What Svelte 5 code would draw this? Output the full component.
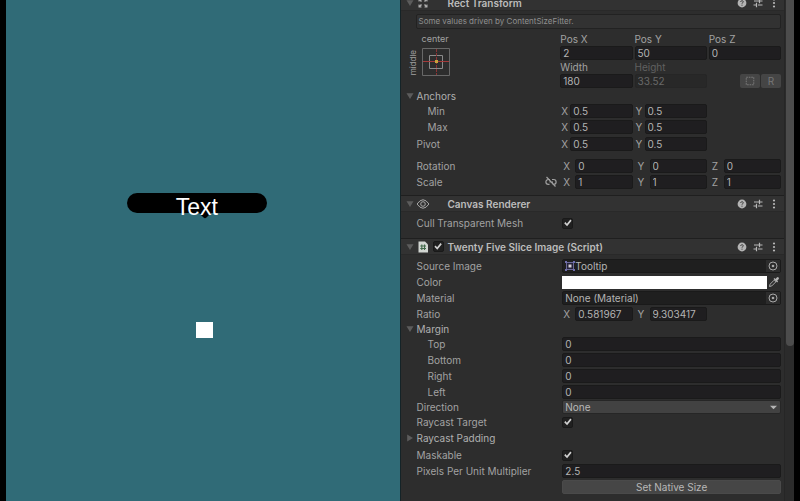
<script>
  let anchorsOpen = $state(true);
  let marginOpen = $state(true);
  let paddingOpen = $state(false);

  const anchors = [
    { name: 'Min', x: '0.5', y: '0.5' },
    { name: 'Max', x: '0.5', y: '0.5' }
  ];
  const margins = ['Top', 'Bottom', 'Right', 'Left'];
</script>

{#snippet arrow(open)}
  <svg class="arrow" class:closed={!open} viewBox="0 0 8 8" aria-hidden="true"><path d="M0.5 1.200h7L4 7z" /></svg>
{/snippet}

{#snippet tools(title)}
  <span class="tools">
    <button aria-label="{title} help">
      <svg viewBox="0 0 12 12"><circle cx="6" cy="6" r="4.400" fill="#b4b4b4" /><path d="M4.700 5c0-1.700 2.600-1.600 2.600-.2 0 .9-1.300.9-1.300 1.900M6 7.700v1" fill="none" stroke="#3a3a3a" /></svg>
    </button>
    <button aria-label="{title} presets">
      <svg viewBox="0 0 12 12" fill="none" stroke="#b8b8b8" stroke-width="1.200"><path d="M2 4h5.500M7.500 1.800v4.400M7.500 4h3M1.500 8h3M4.500 5.800v4.400M6 8h4.500" /></svg>
    </button>
    <button aria-label="{title} menu">
      <svg viewBox="0 0 12 12" fill="#b8b8b8"><circle cx="6" cy="2.500" r="1.100" /><circle cx="6" cy="6" r="1.100" /><circle cx="6" cy="9.500" r="1.100" /></svg>
    </button>
  </span>
{/snippet}

{#snippet axis(group, letter, value)}
  <label class="axis"><span>{letter}</span><input class="field" aria-label="{group} {letter}" {value} /></label>
{/snippet}

{#snippet picker(title)}
  <button class="pick" aria-label="Pick {title}">
    <svg viewBox="0 0 12 12" fill="none" stroke="#a8a8a8"><circle cx="6" cy="6" r="4" /><circle cx="6" cy="6" r="1.300" fill="#a8a8a8" stroke="none" /></svg>
  </button>
{/snippet}

<div class="editor">
  <main class="game">
    <div class="tooltip">
      <svg class="tail" viewBox="0 0 14 7" aria-hidden="true"><path d="M0 0h14L8.500 5.500Q7 7 5.500 5.500z" /></svg>
      <span>Text</span>
    </div>
    <div class="target"></div>
  </main>

  <aside class="inspector">
    <div class="components">
      <section>
        <header>
          {@render arrow(true)}
          <svg class="kind" viewBox="0 0 12 12" fill="#b0b0b0" aria-hidden="true"><path d="M1.500 1.500h3v1l-1 0 1.500 1.500-1 1-1.500-1.500v1h-1zM10.500 1.500h-3v1h1L7 4l1 1 1.500-1.500v1h1zM1.500 10.500h3v-1h-1L5 8 4 7 2.500 8.500v-1h-1zM10.500 10.500h-3v-1h1L7 8l1-1 1.500 1.500v-1h1z" /></svg>
          <span class="slot"></span>
          <h2>Rect Transform</h2>
          {@render tools('Rect Transform')}
        </header>
        <div class="body rect">
          <p class="help">Some values driven by ContentSizeFitter.</p>
          <div class="row placement">
            <div class="preset">
              <span class="across">center</span>
              <span class="down">middle</span>
              <button aria-label="Anchor presets">
                <svg viewBox="0 0 28 28" fill="none"><path d="M.5.5h27v27H.5z" stroke="#686868" /><path d="M7.500 7.500h13v13h-13z" stroke="#8b8b8b" /><path d="M1 13.500h26" stroke="#a43a3a" /><path d="M14.500 1v26" stroke="#8c3434" stroke-dasharray="3 1" /><path d="M13 12h3v3h-3z" fill="#c8a43c" /></svg>
              </button>
            </div>
            <div class="columns">
              <label for="px">Pos X</label><label for="py">Pos Y</label><label for="pz">Pos Z</label>
              <input class="field" id="px" value="2" /><input class="field" id="py" value="50" /><input class="field" id="pz" value="0" />
              <label for="w">Width</label><label class="off" for="h">Height</label><span></span>
              <input class="field" id="w" value="180" /><input class="field" id="h" value="33.52" disabled />
              <div class="modes">
                <button aria-label="Blueprint mode"><svg viewBox="0 0 12 12" fill="none" stroke="#828282"><path d="M1.500 1.500h9v9h-9z" stroke-dasharray="2 1" /></svg></button>
                <button>R</button>
              </div>
            </div>
          </div>
          <button class="fold" aria-expanded={anchorsOpen} onclick={() => (anchorsOpen = !anchorsOpen)}>{@render arrow(anchorsOpen)}Anchors</button>
          {#if anchorsOpen}
            {#each anchors as a}
              <div class="row sub"><span>{a.name}</span><div class="vector">{@render axis(a.name, 'X', a.x)}{@render axis(a.name, 'Y', a.y)}</div></div>
            {/each}
          {/if}
          <div class="row pivot"><span>Pivot</span><div class="vector">{@render axis('Pivot', 'X', '0.5')}{@render axis('Pivot', 'Y', '0.5')}</div></div>
          <div class="row rotation"><span>Rotation</span><div class="vector loose">{@render axis('Rotation', 'X', '0')}{@render axis('Rotation', 'Y', '0')}{@render axis('Rotation', 'Z', '0')}</div></div>
          <div class="row">
            <span class="scale">Scale
              <button aria-label="Constrain proportions"><svg viewBox="0 0 12 12" fill="none" stroke="#a0a0a0" stroke-width="1.200"><path d="M5 3.500H3.300a2.400 2.400 0 0 0 0 4.800H4.500M7 3.500h1.700a2.400 2.400 0 0 1 0 4.800H7.500M1.500 1l9 9.500M4.500 6h1M7 6h1" /></svg></button>
            </span>
            <div class="vector loose">{@render axis('Scale', 'X', '1')}{@render axis('Scale', 'Y', '1')}{@render axis('Scale', 'Z', '1')}</div>
          </div>
        </div>
      </section>

      <section>
        <header>
          {@render arrow(true)}
          <svg class="kind" viewBox="0 0 12 12" fill="none" stroke="#a8a8a8" aria-hidden="true"><path d="M0 6Q6-2.500 12 6Q6 14.500 0 6z" /><circle cx="6" cy="6" r="2.300" /></svg>
          <span class="slot"></span>
          <h2>Canvas Renderer</h2>
          {@render tools('Canvas Renderer')}
        </header>
        <div class="body canvas">
          <div class="row"><label for="cull">Cull Transparent Mesh</label><input type="checkbox" id="cull" checked /></div>
        </div>
      </section>

      <section>
        <header>
          {@render arrow(true)}
          <svg class="kind" viewBox="0 0 12 12" aria-hidden="true"><path d="M1.500.5h6.500l3 3v8h-9.500z" fill="#d2d6d2" /><path d="M4.800 3.500v5.500M7.500 3.500v5.500M3.300 5h5.700M3.300 7.500h5.700" stroke="#41694a" stroke-width="1.100" /></svg>
          <span class="slot"><input type="checkbox" aria-label="Enabled" checked /></span>
          <h2>Twenty Five Slice Image (Script)</h2>
          {@render tools('Twenty Five Slice Image')}
        </header>
        <div class="body image">
          <div class="row">
            <label for="source">Source Image</label>
            <div class="object">
              <svg viewBox="0 0 10 10" aria-hidden="true"><path d="M1.500 1.500h7v7h-7z" fill="#25233a" stroke="#6a6896" /><path d="M0 0h2v2H0zM8 0h2v2H8zM0 8h2v2H0zM8 8h2v2H8z" fill="#716fae" /><path d="M3.500 3.500h3v3h-3z" fill="#d5cfd4" /></svg>
              <input id="source" value="Tooltip" readonly />
              {@render picker('source image')}
            </div>
          </div>
          <div class="row">
            <label for="color">Color</label>
            <div class="swatch">
              <input type="color" id="color" value="#ffffff" />
              <button class="pick" aria-label="Eyedropper"><svg viewBox="0 0 12 12"><path d="M1.500 10.500l.6-2.300 4-4 1.700 1.700-4 4z" fill="none" stroke="#a8a8a8" /><path d="M5.500 3l1-1 1 .9 1.300-1.500q1-.8 1.800 0t0 1.800L9.200 4.600l.9 1-1 1z" fill="#b4b4b4" /></svg></button>
            </div>
          </div>
          <div class="row">
            <label for="material">Material</label>
            <div class="object"><input id="material" value="None (Material)" readonly />{@render picker('material')}</div>
          </div>
          <div class="row"><span>Ratio</span><div class="vector loose">{@render axis('Ratio', 'X', '0.581967')}{@render axis('Ratio', 'Y', '9.303417')}</div></div>
          <button class="fold" aria-expanded={marginOpen} onclick={() => (marginOpen = !marginOpen)}>{@render arrow(marginOpen)}Margin</button>
          {#if marginOpen}
            {#each margins as side}
              <div class="row sub"><label for="margin-{side}">{side}</label><input class="field" id="margin-{side}" value="0" /></div>
            {/each}
          {/if}
          <div class="row short">
            <label for="direction">Direction</label>
            <div class="popup">
              <select id="direction"><option>None</option><option>Horizontal</option><option>Vertical</option></select>
              <svg viewBox="0 0 8 5" aria-hidden="true"><path d="M0 .5h8L4 4.500z" fill="#b4b4b4" /></svg>
            </div>
          </div>
          <div class="row"><label for="raycast">Raycast Target</label><input type="checkbox" id="raycast" checked /></div>
          <button class="fold tall" aria-expanded={paddingOpen} onclick={() => (paddingOpen = !paddingOpen)}>{@render arrow(paddingOpen)}Raycast Padding</button>
          <div class="row maskable"><label for="maskable">Maskable</label><input type="checkbox" id="maskable" checked /></div>
          <div class="row"><label for="ppu">Pixels Per Unit Multiplier</label><input class="field" id="ppu" value="2.5" /></div>
          <div class="row"><span></span><button class="native">Set Native Size</button></div>
        </div>
      </section>
    </div>
    <div class="scrollbar"><div class="thumb"></div></div>
  </aside>
</div>

<style>
  :global(body) { margin: 0; background: #000; }
  * { box-sizing: border-box; }
  .editor {
    display: flex;
    height: 100vh;
    padding: 0 6px;
    overflow: hidden;
    font: 10px/14px Inter, "Liberation Sans", sans-serif;
    color: #a2a2a2;
  }
  button, input, select { font: inherit; color: inherit; margin: 0; }
  button { padding: 0; border: 0; background: none; }
  svg { display: block; flex: none; }

  .game { position: relative; flex: 1 1 0; background: #306b77; }
  .tooltip {
    position: absolute;
    top: 193px;
    left: calc(50% - 76px);
    width: 140px;
    height: 20px;
    border-radius: 10px;
    background: #000;
    color: #fff;
    font: 23px/28px "Liberation Sans", Arial, sans-serif;
    text-align: center;
  }
  .tooltip span { position: relative; }
  .tail { position: absolute; top: 19px; left: 71px; width: 14px; height: 7px; }
  .target { position: absolute; top: 322px; left: calc(50% - 7px); width: 17px; height: 16px; background: #fff; }

  .inspector { display: flex; flex: 1 1 0; min-width: 0; background: #2d2d2d; border-left: 1px solid #142327; }
  .components { flex: 1; min-width: 0; margin-top: -6px; }
  .scrollbar { width: 10px; padding-left: 1px; border-left: 1px solid #262626; background: #2b2b2b; }
  .thumb { height: 69%; border-radius: 0 0 4px 4px; background: #4c4c4c; }

  header {
    display: flex;
    align-items: center;
    height: 17px;
    padding: 0 4px 0 5px;
    border-top: 1px solid #1f1f1f;
    border-bottom: 1px solid #292929;
    background: #323232;
  }
  .arrow { width: 8px; height: 8px; fill: #5c5c5c; }
  .arrow.closed { transform: rotate(-90deg); }
  .kind { width: 12px; height: 12px; margin-left: 3px; }
  .slot { display: flex; width: 19px; padding-left: 4px; }
  h2 { flex: 1; margin: 0; font-size: 10px; font-weight: 600; color: #bcbcbc; }
  .tools { display: flex; gap: 4px; }
  .tools svg { width: 12px; height: 12px; }

  .body { padding: 0 3px 0 16px; }
  .body.rect { padding-top: 3px; padding-bottom: 5px; }
  .body.canvas { padding-top: 3px; padding-bottom: 7px; }
  .body.image { padding-top: 3px; }
  .help {
    height: 15px;
    margin: 0 0 3px -1px;
    padding: 0 2px;
    border: 1px solid #222;
    border-radius: 2px;
    background: #323232;
    font-size: 8px;
    line-height: 13px;
    color: #909090;
  }

  .row { display: grid; grid-template-columns: 2fr 3fr; align-items: center; height: 16px; }
  .row.short { height: 14px; }
  .row.sub > :first-child { padding-left: 11px; }
  .row.pivot, .row.maskable { margin-top: 1px; }
  .row.rotation { margin-top: 6px; }
  .row.placement { height: auto; align-items: start; margin-bottom: 1px; }

  .field {
    width: 100%;
    min-width: 0;
    height: 14px;
    padding: 0 2px;
    border: 1px solid #1a1a1a;
    border-radius: 2px;
    background: #1f1e20;
    color: #b4b4b4;
    outline: none;
  }
  .field:disabled { border-color: #262626; background: #282828; color: #686868; }

  .columns, .vector { display: grid; grid-template-columns: repeat(3, minmax(0, 1fr)); column-gap: 2px; margin-left: -2px; }
  .columns label { height: 14px; }
  .columns .off { color: #606060; }
  .modes { display: flex; justify-content: flex-end; gap: 1px; }
  .modes button { display: flex; align-items: center; justify-content: center; width: 20px; height: 14px; background: #454545; color: #777; border-radius: 2px; }
  .modes svg { width: 10px; height: 10px; }
  .axis { display: flex; align-items: center; }
  .axis span { flex: none; width: 10px; padding-left: 1px; }
  .loose .axis span { width: 15px; padding-left: 3px; }

  .preset { display: grid; grid-template-columns: 28px; justify-content: start; position: relative; padding-left: 5px; font-size: 9px; }
  .preset button { margin-top: 2px; }
  .preset button svg { width: 28px; height: 28px; }
  .down { position: absolute; top: 18px; left: -11px; font-size: 8px; writing-mode: vertical-rl; transform: rotate(180deg); }

  .fold { display: flex; align-items: center; height: 14px; margin-left: -11px; gap: 3px; color: #b0b0b0; }
  .fold.tall { height: 16px; }
  .scale { display: flex; align-items: center; justify-content: space-between; padding-right: 5px; }
  .scale svg { width: 12px; height: 12px; }

  input[type='checkbox'] { appearance: none; display: flex; align-items: center; justify-content: center; width: 11px; height: 11px; border: 1px solid #191919; border-radius: 2px; background: #202020; }
  input[type='checkbox']:checked::after {
    content: '';
    width: 9px;
    height: 9px;
    background: #d0d0d0;
    clip-path: polygon(10% 52%, 24% 40%, 40% 58%, 78% 12%, 92% 24%, 42% 86%);
  }

  .object { display: flex; align-items: center; height: 14px; padding-left: 2px; border: 1px solid #1a1a1a; border-radius: 2px; background: #1f1f1f; color: #b4b4b4; }
  .object > svg { width: 10px; height: 10px; }
  .object input { flex: 1; min-width: 0; height: 12px; padding: 0; border: 0; background: none; outline: none; }
  .pick { width: 14px; height: 12px; background: #2c2c2c; }
  .pick svg { width: 12px; height: 12px; margin: 0 auto; }
  .swatch { display: flex; align-items: center; }
  .swatch input { flex: 1; min-width: 0; height: 13px; padding: 0; border: 0; background: none; appearance: none; }
  .swatch input::-webkit-color-swatch-wrapper { padding: 0; }
  .swatch input::-webkit-color-swatch { border: 0; border-radius: 0; }

  .popup { position: relative; }
  .popup select { display: block; width: 100%; height: 14px; padding: 0 2px; appearance: none; border: 1px solid #262626; border-radius: 2px; background: #424242; color: #b8b8b8; line-height: 12px; }
  .popup svg { position: absolute; top: 5px; right: 4px; width: 7px; height: 5px; pointer-events: none; }
  .native { height: 14px; border: 1px solid #4a4a4a; border-radius: 2px; background: #464646; color: #b8b8b8; line-height: 12px; }
</style>
